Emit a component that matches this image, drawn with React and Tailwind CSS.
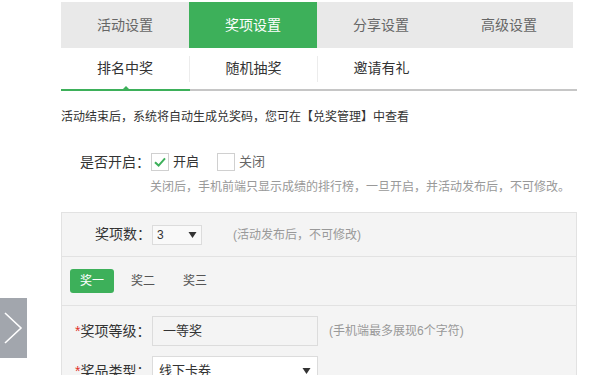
import React, { useState } from 'react';

const GREEN = 'bg-[#3db05a]';

function Checkbox({ checked }) {
  return (
    <span className="w-[18px] h-[18px] border border-[#d0d0d0] bg-white flex items-center justify-center">
      {checked && (
        <svg width="14" height="14" viewBox="0 0 14 14">
          <path d="M2 7.2 L5.6 10.6 L12 3.4" fill="none" stroke="#3db05a" strokeWidth="2" />
        </svg>
      )}
    </span>
  );
}

function Arrow() {
  return (
    <svg width="9" height="8" viewBox="0 0 9 8">
      <path d="M0.5 1 L8.5 1 L4.5 7 Z" fill="#333" />
    </svg>
  );
}

export default function App() {
  const [tab] = useState(1);
  const tabs = ['活动设置', '奖项设置', '分享设置', '高级设置'];
  const subTabs = ['排名中奖', '随机抽奖', '邀请有礼'];

  return (
    <div
      className="relative w-[600px] h-[375px] overflow-hidden bg-white text-[#333]"
      style={{ fontFamily: '"Liberation Sans", "Noto Sans CJK SC", sans-serif' }}
    >
      <div className="ml-[61px] w-[516px] pt-[2px]">
        {/* main tabs */}
        <div className="flex w-[512px] h-[46px] bg-[#e9e9e9]">
          {tabs.map((t, i) => (
            <div
              key={t}
              className={`flex-1 flex items-center justify-center text-[14px] ${
                i === tab ? `${GREEN} text-white` : 'text-[#666]'
              }`}
            >
              {t}
            </div>
          ))}
        </div>

        {/* sub tabs */}
        <div className="flex h-[41px] items-center">
          {subTabs.map((t, i) => (
            <div
              key={t}
              className={`w-[128px] h-[26px] flex items-center justify-center text-[14px] text-[#333] ${
                i > 0 ? 'border-l border-[#ececec]' : ''
              }`}
            >
              {t}
            </div>
          ))}
        </div>
        <div className="relative h-[2px] bg-[#c6c6c6]">
          <div className={`w-[129px] h-[2px] ${GREEN}`} />
          <div className="absolute left-[62px] top-[-3px] w-0 h-0 border-l-[3px] border-r-[3px] border-b-[3px] border-l-transparent border-r-transparent border-b-[#3db05a]" />
        </div>

        <div className="mt-[16px] text-[12px] leading-[20px] text-[#333]">
          活动结束后，系统将自动生成兑奖码，您可在【兑奖管理】中查看
        </div>

        {/* switch */}
        <div className="mt-[26px] flex items-center h-[18px] text-[14px]">
          <span className="ml-[19px] w-[71px] text-[#333]">是否开启：</span>
          <Checkbox checked />
          <span className="ml-[4px] text-[13px] text-[#333]">开启</span>
          <span className="ml-[18px]"><Checkbox /></span>
          <span className="ml-[4px] text-[13px] text-[#666]">关闭</span>
        </div>
        <div className="ml-[89px] mt-[7px] text-[12px] leading-[18px] text-[#999]">
          关闭后，手机前端只显示成绩的排行榜，一旦开启，并活动发布后，不可修改。
        </div>

        {/* prize panel */}
        <div className="mt-[16px] border border-[#e2e2e2] bg-[#f4f4f4]">
          <div className="h-[44px] flex items-center border-b border-[#e2e2e2]">
            <span className="ml-[33px] w-[57px] text-[14px] text-[#333]">奖项数：</span>
            <div className="w-[50px] h-[20px] border border-[#dcdcdc] bg-[#f9f9f9] flex items-center justify-between px-[4px]">
              <span className="text-[12px] text-[#333]">3</span>
              <Arrow />
            </div>
            <span className="ml-[31px] text-[12px] text-[#999]">(活动发布后，不可修改)</span>
          </div>

          <div className="h-[49px] flex items-center border-b border-[#e2e2e2] text-[12px]">
            <div className={`ml-[8px] w-[44px] h-[24px] rounded-[3px] ${GREEN} text-white flex items-center justify-center`}>
              奖一
            </div>
            <span className="ml-[17px] text-[#555]">奖二</span>
            <span className="ml-[28px] text-[#555]">奖三</span>
          </div>

          <div className="pt-[10px] pb-[20px] flex flex-col gap-[10px]">
            <div className="flex items-center h-[30px]">
              <span className="ml-[13px] w-[77px] text-[14px] text-[#333]">
                <span className="text-[#e0322b]">*</span>奖项等级：
              </span>
              <div className="w-[166px] h-[30px] border border-[#dcdcdc] bg-[#f4f4f4] flex items-center px-[10px] text-[13px] text-[#333]">
                一等奖
              </div>
              <span className="ml-[11px] text-[12px] text-[#999]">(手机端最多展现6个字符)</span>
            </div>
            <div className="flex items-center h-[30px]">
              <span className="ml-[13px] w-[77px] text-[14px] text-[#333]">
                <span className="text-[#e0322b]">*</span>奖品类型：
              </span>
              <div className="w-[166px] h-[30px] border border-[#dcdcdc] bg-white flex items-center justify-between px-[6px] text-[13px] text-[#333]">
                <span>线下卡券</span>
                <Arrow />
              </div>
            </div>
          </div>
        </div>
      </div>

      {/* side toggle */}
      <div className="absolute left-0 top-[298px] w-[27px] h-[60px] bg-[#a2a6ad] flex items-center justify-center">
        <svg width="27" height="60" viewBox="0 0 27 60">
          <path d="M5 15 L21 30 L5 45" fill="none" stroke="#fff" strokeWidth="1.6" />
        </svg>
      </div>
    </div>
  );
}
